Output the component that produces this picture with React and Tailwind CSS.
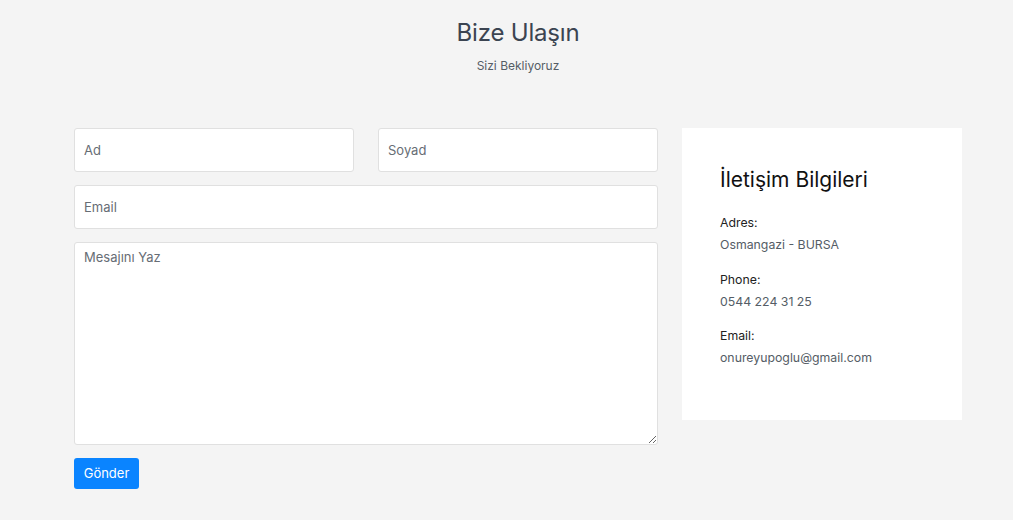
export default function App() {
    return (
        <div className="min-h-screen bg-[#f4f4f4] font-['Inter',sans-serif]">
            <div className="ml-[74px] w-[888px] pt-[17px]">
                {/* Başlık */}
                <div className="text-center">
                    <h1 className="text-[24px] leading-[32px] tracking-[-0.2px] text-[#3b4451]">
                        Bize Ulaşın
                    </h1>
                    <p className="mt-[9px] text-[12px] leading-[16px] text-[#555d66]">
                        Sizi Bekliyoruz
                    </p>
                </div>

                <div className="mt-[54px] flex gap-6">
                    {/* Form */}
                    <form className="flex w-[584px] flex-col gap-[13px]">
                        <div className="flex gap-6">
                            <input
                                placeholder="Ad"
                                className="h-[44px] w-[280px] rounded-[3px] border border-[#e0e0e0] bg-white px-[9px] text-[13px] placeholder:text-[#676d75] outline-none"
                            />
                            <input
                                placeholder="Soyad"
                                className="h-[44px] w-[280px] rounded-[3px] border border-[#e0e0e0] bg-white px-[9px] text-[13px] placeholder:text-[#676d75] outline-none"
                            />
                        </div>
                        <input
                            placeholder="Email"
                            className="h-[44px] w-full rounded-[3px] border border-[#e0e0e0] bg-white px-[9px] text-[13px] placeholder:text-[#676d75] outline-none"
                        />
                        <textarea
                            placeholder="Mesajını Yaz"
                            className="h-[203px] w-full rounded-[3px] border border-[#e0e0e0] bg-white px-[9px] py-[5px] text-[13px] placeholder:text-[#676d75] outline-none"
                        />
                        <div>
                            <button
                                type="button"
                                className="h-[31px] w-[65px] rounded-[3px] bg-[#0a84ff] text-[13px] text-white"
                            >
                                Gönder
                            </button>
                        </div>
                    </form>

                    {/* İletişim bilgileri */}
                    <div className="h-[292px] w-[280px] bg-white pl-[38px] pt-[38px]">
                        <h2 className="text-[21px] leading-[28px] text-[#111]">
                            İletişim Bilgileri
                        </h2>
                        <div className="mt-[18px] text-[12.3px] leading-[22px]">
                            <p className="text-[#222]">Adres:</p>
                            <p className="text-[#555d66]">Osmangazi - BURSA</p>
                            <p className="mt-[13px] text-[#222]">Phone:</p>
                            <p className="text-[#555d66]">0544 224 31 25</p>
                            <p className="mt-[12px] text-[#222]">Email:</p>
                            <p className="text-[#555d66]">onureyupoglu@gmail.com</p>
                        </div>
                    </div>
                </div>
            </div>
        </div>
    );
}
